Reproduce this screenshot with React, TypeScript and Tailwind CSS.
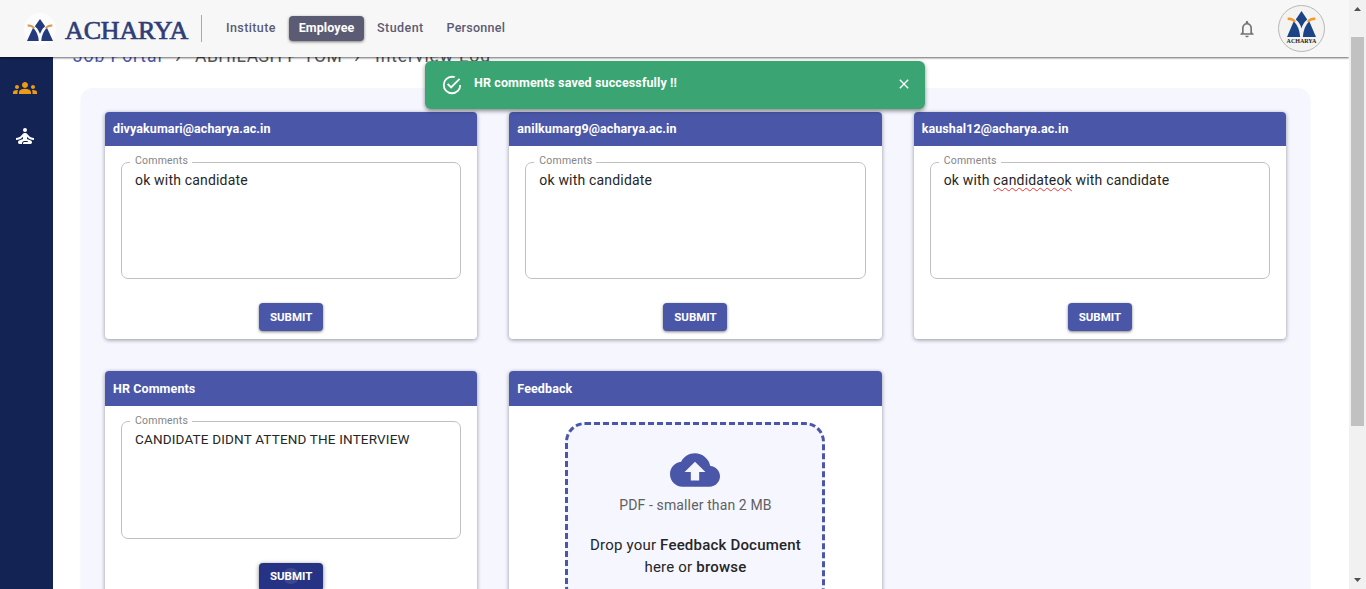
import type { ReactNode } from "react";
import {
  MdClose,
  MdCloudUpload,
  MdGroups,
  MdNotificationsNone,
  MdSelfImprovement,
} from "react-icons/md";

function AcharyaMark({ className, fill, accent }: { className: string; fill: string; accent: string }) {
  return (
    <svg viewBox="0 0 86 76" className={className} preserveAspectRatio="none" aria-hidden="true">
      <path d="M43 0 L60 25 Q48 34 43 51 Q38 34 26 25 Z" fill={fill} />
      <path d="M20 30 Q37 46 39 76 H0 Z" fill={fill} />
      <path d="M66 30 Q49 46 47 76 H86 Z" fill={fill} />
      <path d="M2 19 Q18 17 27 31 L22 33 Q14 26 2 26 Z" fill={accent} />
      <path d="M84 19 Q68 17 59 31 L64 33 Q72 26 84 26 Z" fill={accent} />
    </svg>
  );
}

function Header() {
  return (
    <header className="relative z-20 flex h-[57px] shrink-0 items-center bg-[#f7f7f7] shadow-[0_1px_2px_0_rgba(0,0,0,0.6)]">
      <div className="ml-6 flex h-8 w-8 items-center justify-center rounded-full bg-[#fcfcfc]">
        <AcharyaMark className="mt-0.5 h-[22px] w-[26px]" fill="#233a7c" accent="#d99a4e" />
      </div>
      <span className="ml-[9px] mt-[4px] w-[124px] whitespace-nowrap font-['Liberation_Serif',serif] text-[26px] leading-8 tracking-[-0.15px] text-[#2f3d78] [-webkit-text-stroke:0.7px_#2f3d78]">
        ACHARYA
      </span>
      <span className="ml-[12px] h-[27px] w-px bg-[#aaaaaa]" />
      <nav className="ml-[17px] flex items-center text-[12.5px] font-medium text-[#5b5b74]">
        <a className="w-[70px] whitespace-nowrap pl-[7px] tracking-[0.4px]">Institute</a>
        <a className="flex h-[25px] w-[75px] items-center justify-center whitespace-nowrap rounded bg-[#5b5c74] font-bold tracking-[0.1px] text-white shadow-[0_1px_3px_rgba(0,0,0,0.5)]">
          Employee
        </a>
        <a className="w-[70px] whitespace-nowrap pl-[13px] tracking-[0.45px]">Student</a>
        <a className="whitespace-nowrap pl-[12.5px] tracking-[0.25px]">Personnel</a>
      </nav>
      <MdNotificationsNone className="ml-auto mr-[21px] h-5 w-5 text-[#757575]" />
      <div className="mr-6 flex h-[47px] w-[47px] flex-col items-center rounded-full border border-[#b8b8b8] bg-[#f3f3f2] pt-[5px]">
        <AcharyaMark className="h-[26px] w-[29px]" fill="#1c4386" accent="#f39a2b" />
        <span className="mt-px font-['Liberation_Serif',serif] text-[6px] font-bold leading-[7px] text-[#222222]">ACHARYA</span>
      </div>
    </header>
  );
}

function Card({ title, children }: { title: string; children: ReactNode }) {
  return (
    <section className="overflow-hidden rounded bg-white shadow-[0_1px_4px_rgba(0,0,0,0.4)]">
      <h2 className="flex h-[34.6px] items-center bg-[#4a57a9] px-2 pt-[0.8px] text-[12.5px] font-bold tracking-[0.1px] text-white">
        {title}
      </h2>
      {children}
    </section>
  );
}

function CommentCard({
  title,
  pressed = false,
  children,
}: {
  title: string;
  pressed?: boolean;
  children: ReactNode;
}) {
  return (
    <Card title={title}>
      <div className="flex flex-col items-center px-4 pb-2 pt-[10px]">
        <fieldset className="h-[123px] w-full rounded-[7px] border border-[#c0c0c0] pl-[8px]">
          <legend className="h-[12px] w-[62px] whitespace-nowrap pl-[5px] text-[10.5px] leading-[9px] tracking-[0.2px] text-[#858585]">
            Comments
          </legend>
          <p
            className={
              pressed
                ? "mt-[1px] pl-[5px] text-[13.5px] leading-5 tracking-[0.17px] text-[#262626]"
                : "mt-[2px] pl-[5px] text-[14px] leading-5 tracking-[0.18px] text-[#262626]"
            }
          >
            {children}
          </p>
        </fieldset>
        <button
          className={
            pressed
              ? "relative mt-6 h-7 w-16 rounded bg-[#263384] text-[11.5px] font-bold text-white shadow-[0_1px_4px_rgba(0,0,0,0.5)]"
              : "relative mt-6 h-7 w-16 rounded bg-[#4a57a9] text-[11.5px] font-bold text-white shadow-[0_1px_3px_rgba(0,0,0,0.5)]"
          }
        >
          {pressed && <span className="absolute left-6 top-[5px] h-4 w-4 rounded-full bg-white/10" />}
          SUBMIT
        </button>
      </div>
    </Card>
  );
}

function Toast() {
  return (
    <div className="absolute left-[425px] top-[61px] z-30 flex h-12 w-[500px] items-start rounded-md bg-[#3aa472] px-4 text-white shadow-[0_2px_4px_rgba(0,0,0,0.45)]">
      <svg viewBox="0 0 24 24" className="mt-[13px] h-[22px] w-[22px]" fill="currentColor">
        <path d="M20 12A8 8 0 1 1 12 4C12.76 4 13.5 4.11 14.2 4.31L15.77 2.74C14.61 2.26 13.34 2 12 2A10 10 0 1 0 22 12M7.91 10.08L6.5 11.5L11 16L21 6L19.59 4.58L11 13.17L7.91 10.08Z" />
      </svg>
      <span className="ml-[11px] mt-[12px] whitespace-nowrap text-[12.5px] font-bold leading-5 tracking-[0.12px]">
        HR comments saved successfully !!
      </span>
      <MdClose className="ml-auto mr-[-3px] mt-[15px] h-4 w-4" />
    </div>
  );
}

function Scrollbar() {
  return (
    <div className="flex w-[17px] shrink-0 flex-col items-center bg-[#f1f1f1]">
      <svg viewBox="0 0 17 17" className="h-[17px] w-[17px]">
        <path d="M5 11h7L8.500 7z" fill="#505050" />
      </svg>
      <div className="mt-[20px] h-[389px] w-[13px] bg-[#c1c1c1]" />
      <svg viewBox="0 0 17 17" className="mt-auto h-[17px] w-[17px]">
        <path d="M5 6h7L8.500 10z" fill="#505050" />
      </svg>
    </div>
  );
}

export default function App() {
  return (
    <div className="relative flex h-[589px] w-[1366px] overflow-hidden bg-white font-[Roboto,sans-serif]">
      <div className="flex min-w-0 flex-1 flex-col overflow-hidden">
        <Header />
        <div className="flex min-h-0 flex-1">
          <aside className="flex w-[53px] shrink-0 flex-col items-center gap-6 bg-[#132353] pt-[19px]">
            <MdGroups className="mr-1 h-6 w-6 text-[#ed9b12]" />
            <MdSelfImprovement className="mr-1 h-6 w-6 text-white" />
          </aside>
          <main className="min-w-0 flex-1 overflow-hidden pl-7 pr-[39px]">
            <div className="-ml-2 -mt-[14px] flex h-[26px] items-center whitespace-nowrap text-[17.5px] text-[#555555]">
              <span className="w-[102px] tracking-[0.9px] text-[#4a57a9]">Job Portal</span>
              <span className="w-[20px] text-[20px]">›</span>
              <span className="w-[158px] tracking-[0.5px]">ABHILASH P TOM</span>
              <span className="w-[22px] pl-px text-[20px]">›</span>
              <span className="tracking-[0.9px]">Interview Log</span>
            </div>
            <div className="mt-[19px] grid h-[600px] grid-cols-3 content-start gap-8 rounded-xl bg-[#f5f6ff] px-6 pt-[23.7px] shadow-[0_1px_2px_rgba(0,0,0,0.08)]">
              <CommentCard title="divyakumari@acharya.ac.in">ok with candidate</CommentCard>
              <CommentCard title="anilkumarg9@acharya.ac.in">ok with candidate</CommentCard>
              <CommentCard title="kaushal12@acharya.ac.in">
                ok with{" "}
                <span className="underline decoration-[#ee3333] decoration-wavy decoration-1 underline-offset-2">
                  candidateok
                </span>{" "}
                with candidate
              </CommentCard>
              <CommentCard title="HR Comments" pressed>
                CANDIDATE DIDNT ATTEND THE INTERVIEW
              </CommentCard>
              <Card title="Feedback">
                <div className="flex justify-center pb-6 pt-4">
                  <div className="flex h-[184px] w-[260px] flex-col items-center rounded-[20px] border-[3px] border-dashed border-[#4a57a9] bg-[#f5f6ff] pt-[20px]">
                    <MdCloudUpload className="h-[50px] w-[50px] text-[#4a57a9]" />
                    <p className="whitespace-nowrap text-[14px] leading-5 tracking-[0.12px] text-[#606060]">
                      PDF - smaller than 2 MB
                    </p>
                    <p className="mt-[19px] whitespace-nowrap text-center text-[15px] leading-[22px] tracking-[0.2px] text-[#262626]">
                      Drop your <b className="font-medium">Feedback Document</b>
                      <br />
                      here or <b className="font-medium">browse</b>
                    </p>
                  </div>
                </div>
              </Card>
            </div>
          </main>
        </div>
      </div>
      <Scrollbar />
      <Toast />
    </div>
  );
}
